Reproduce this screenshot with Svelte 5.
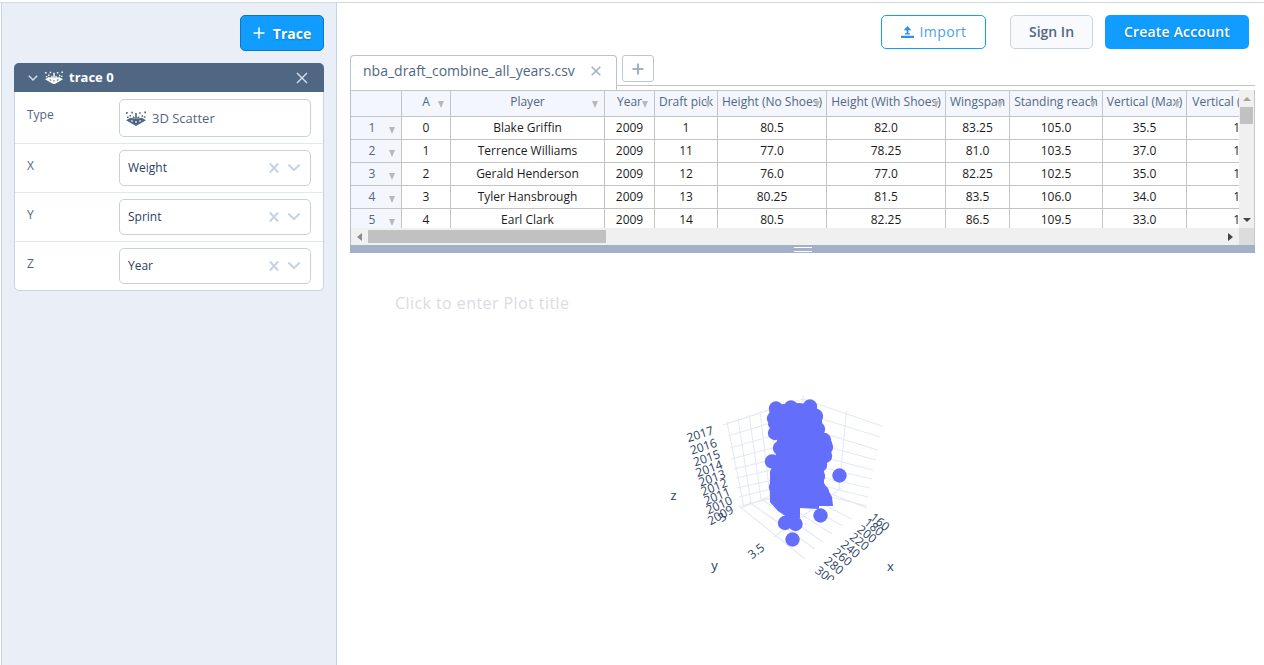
<script>
  const columns = [
    { name: 'A', width: 49, values: ['0', '1', '2', '3', '4'] },
    { name: 'Player', width: 154, values: ['Blake Griffin', 'Terrence Williams', 'Gerald Henderson', 'Tyler Hansbrough', 'Earl Clark'] },
    { name: 'Year', width: 50, values: ['2009', '2009', '2009', '2009', '2009'] },
    { name: 'Draft pick', width: 63, values: ['1', '11', '12', '13', '14'] },
    { name: 'Height (No Shoes)', width: 109, values: ['80.5', '77.0', '76.0', '80.25', '80.5'] },
    { name: 'Height (With Shoes)', width: 119, values: ['82.0', '78.25', '77.0', '81.5', '82.25'] },
    { name: 'Wingspan', width: 64, values: ['83.25', '81.0', '82.25', '83.5', '86.5'] },
    { name: 'Standing reach', width: 93, values: ['105.0', '103.5', '102.5', '106.0', '109.5'] },
    { name: 'Vertical (Max)', width: 84, values: ['35.5', '37.0', '35.0', '34.0', '33.0'] },
    { name: 'Vertical (Max Reach)', width: 124, values: ['140.5', '140.5', '137.5', '140.0', '142.5'] },
  ];
  const template = ['51px', ...columns.map((c) => c.width + 'px')].join(' ');
  const axes = [['X', 'Weight'], ['Y', 'Sprint'], ['Z', 'Year']];

  const zTicks = [
    ['2017', 700, 434, -17], ['2016', 703.5, 446.5, -18], ['2015', 706.5, 458, -19],
    ['2014', 709, 468.5, -20], ['2013', 712, 478, -20], ['2012', 714, 487, -21],
    ['2011', 717, 496, -22], ['2010', 719, 505, -24], ['2009', 720.5, 515, -29], ['3', 722, 517, -38],
  ];
  const xTicks = [
    ['160', 880, 522, 38], ['180', 874, 527, 38], ['200', 867, 534, 38], ['220', 859.5, 541.5, 38],
    ['240', 850.5, 549, 38], ['260', 842.5, 557, 38], ['280', 834, 565.5, 38], ['300', 825, 575, 38],
  ];
  const lines = [
    // y-z wall
    'M723 425L803 399', 'M728 436L803 413', 'M730 448L803 427', 'M731 459L803 440', 'M734 469L803 452',
    'M736 478L803 463', 'M737 488L803 473', 'M739 497L803 481', 'M741 506L803 490',
    'M727 422L744 507', 'M738 418L751 503', 'M749 414L761 499', 'M760 411L770 496', 'M771 408L778 493', 'M787 403L790 490',
    // x-z wall
    'M803 395V490', 'M803 399L882 426', 'M803 413L880 437', 'M803 427L878 450', 'M803 440L876 460',
    'M803 452L873 470', 'M803 463L872 479', 'M803 473L870 488', 'M803 481L868 497', 'M803 490L867 506',
    'M846.5 411L839 490',
    // floor
    'M739 506L805 559', 'M749 502L815 549', 'M760 498L823 542', 'M770 494L832 534', 'M779 491L843 526',
    'M790 488L852 519', 'M803 483L867 508', 'M774 537L841 488', 'M741 508L803 483',
  ];
  const points = [
    [776, 408.5], [791, 407.5], [810, 406.5], [774, 418.5], [816, 416], [775, 433], [818, 429], [824, 440],
    [826, 447], [825, 456], [772, 461.5], [780, 448], [777, 473], [776, 487], [820, 465], [818, 476],
    [777, 499], [822, 492], [785, 506], [790, 508], [796, 420], [788, 480], [785, 523], [795.5, 524],
    [820.5, 515.5], [839.5, 475.5], [792.5, 539.5],
  ];
</script>

{#snippet scatterIcon(w)}
  <svg class="scatter" width={w} height={w * 0.75} viewBox="0 0 20 15" fill="currentColor">
    <path d="M0 9.2L4.3 6.8L9.2 8V2H10.8V8L15.7 6.8L20 9.2L10 15Z" />
    <path d="M6 7.4L7.8 5L9.2 7.5zM14 7.4L12.2 5L10.8 7.5z" />
    <path d="M0 1h1.7v1.7H0zM3.5 4h1.5v1.5H3.5zM1 5.6h1.6v1.5H1zM5.3.8h1.6v1.6H5.3zM13.2 1.2h1.6v1.6h-1.6zM15.5 4.2H17v1.5h-1.5zM18.3.5H20v1.7h-1.7zM17.8 5.3h1.6v1.5h-1.6z" />
    <path class="hole" d="M9.3 10.2h1.4v1.6H9.3zM5.5 9.3l1.8.8-1 .6-1.7-.8zM14.5 9.3l-1.8.8 1 .6 1.7-.8z" />
  </svg>
{/snippet}

<div class="page">
  <aside>
    <div class="actions">
      <button class="trace-btn"><svg width="12" height="12" viewBox="0 0 12 12"><path d="M6 .5v11M.5 6h11" stroke="#fff" stroke-width="1.5" /></svg><b>Trace</b></button>
    </div>
    <section class="card">
      <header>
        <svg class="chev" width="10" height="6" viewBox="0 0 10 6"><path d="M.8.8L5 5L9.2.8" fill="none" stroke="#d8e0ec" stroke-width="1.4" /></svg>
        {@render scatterIcon(18)}
        <b>trace 0</b>
        <svg class="x" width="12" height="12" viewBox="0 0 12 12"><path d="M1 1l10 10M11 1L1 11" stroke="#d8e0ec" stroke-width="1.4" /></svg>
      </header>
      <div class="field type">
        <label for="type">Type</label>
        <div class="select" id="type">{@render scatterIcon(20)}<span>3D Scatter</span></div>
      </div>
      {#each axes as [axis, value]}
        <div class="field">
          <label for={axis}>{axis}</label>
          <div class="select" id={axis}>
            <span>{value}</span>
            <svg width="10" height="10" viewBox="0 0 10 10"><path d="M.9.5l8.2 9M9.1.5L.9 9.5" stroke="#c8d4e3" stroke-width="2.2" /></svg>
            <svg width="12" height="8" viewBox="0 0 12 8"><path d="M1 1.2L6 6L11 1.2" fill="none" stroke="#c8d4e3" stroke-width="2.2" stroke-linecap="round" /></svg>
          </div>
        </div>
      {/each}
    </section>
  </aside>

  <main>
    <nav>
      <button class="import"><svg width="13" height="12" viewBox="0 0 13 12"><path d="M0 9.7h13V12H0zM5.6 2.5h1.8V8H5.6zM2.5 4.2L6.5 0L10.5 4.2zM4 7.3h5v1.2H4z" fill="#2f8fe0" /></svg><span>Import</span></button>
      <button class="signin"><span>Sign In</span></button>
      <button class="create"><span>Create Account</span></button>
    </nav>

    <div class="tabs">
      <div class="tab"><span>nba_draft_combine_all_years.csv</span><svg width="10" height="10" viewBox="0 0 10 10"><path d="M.7.7l8.6 8.6M9.3.7L.7 9.3" stroke="#a2b1c6" stroke-width="1.6" /></svg></div>
      <div class="rest"><button class="add" aria-label="Add"><svg width="12" height="12" viewBox="0 0 12 12"><path d="M6 .5v11M.5 6h11" stroke="#a2b1c6" stroke-width="2" /></svg></button></div>
    </div>

    <div class="sheet">
      <div class="viewport">
        <div class="row head" style="grid-template-columns:{template}">
          <div class="cell"></div>
          {#each columns as c}
            <div class="cell"><span>{c.name}</span><i></i></div>
          {/each}
        </div>
        {#each [0, 1, 2, 3, 4] as r}
          <div class="row" style="grid-template-columns:{template}">
            <div class="cell index"><span>{r + 1}</span><i></i></div>
            {#each columns as c}<div class="cell"><span>{c.values[r]}</span></div>{/each}
          </div>
        {/each}
      </div>
      <div class="vbar"><i class="up"></i><div></div><i class="down"></i></div>
      <div class="hbar"><i class="left"></i><div></div><i class="right"></i></div>
      <div class="corner"></div>
    </div>
    <div class="splitter"><span></span></div>

    <div class="plot">
      <svg width="904" height="412" viewBox="350 253 904 412">
        <clipPath id="scene"><rect x="600" y="380" width="400" height="200" /></clipPath>
        <text x="395" y="308.5" font-size="16" fill="#dadcdf" textLength="174">Click to enter Plot title</text>
        <g clip-path="url(#scene)">
          <path d={lines.join('')} stroke="#e5e9f6" stroke-width="1.1" fill="none" />
          <g fill="#636efa">
            <path d="M770 408L783 404L800 403L816 406L822 418L822 430L832 442L831 456L824 468L824 483L832 497L833 506H819V509L800 508V518L790 519L778 511L770 502L770 476L775 462L777 440L768 425Z" />
            {#each points as [x, y]}<circle cx={x} cy={y} r="7.2" />{/each}
          </g>
          <g font-size="12" fill="#2a3f5f" text-anchor="middle">
            {#each [...zTicks, ...xTicks] as [label, x, y, angle]}
              <text transform="translate({x} {y}) rotate({angle})" y="4.3">{label}</text>
            {/each}
            <text transform="translate(756 551) rotate(-38)" y="4.3">3.5</text>
            <text x="673.5" y="500" font-size="13">z</text>
            <text x="714.5" y="570" font-size="13">y</text>
            <text x="890.5" y="571" font-size="13">x</text>
          </g>
        </g>
      </svg>
    </div>
  </main>
</div>

<style>
  :global(body) { background: #fff; overflow: hidden; }
  * { box-sizing: border-box; }
  .page { width: 1264px; height: 665px; padding-top: 2px; display: flex; font: 12px "Open Sans", sans-serif; color: #506784; overflow: hidden; }
  svg { display: block; flex: none; }
  button { font: inherit; padding: 0; display: flex; align-items: center; justify-content: center; border-radius: 5px; }
  aside { width: 336px; margin-left: 1px; background: #e9eef7; border: 1px solid #c8d4e3; border-bottom: 0; padding: 12px 12px 0; flex: none; }
  .actions { display: flex; justify-content: flex-end; }
  .trace-btn { width: 84px; height: 36px; background: #119dff; border: 1px solid #0d76bf; color: #fff; gap: 8px; font-size: 14px; text-shadow: 0 1px 2px #0d76bf; }
  .card { margin-top: 12px; width: 310px; height: 228px; background: #fff; border: 1px solid #c8d4e3; border-radius: 5px; }
  .card header { height: 29px; margin: -1px -1px 0; background: #506784; border-radius: 5px 5px 0 0; color: #fff; display: flex; align-items: center; padding: 0 16px 0 14px; font-size: 13px; }
  header .chev { margin-right: 7px; }
  header b { margin-left: 6px; flex: 1; padding-bottom: 1px; }
  .hole { fill: #fff; }
  header .hole { fill: #506784; }
  .field { display: flex; height: 49px; border-top: 1px solid #dfe8f3; padding: 6px 12px 0; }
  .field.type { height: 51px; border: 0; padding-top: 7px; }
  .field label { width: 92px; padding-top: 7px; line-height: 18px; }
  .select { width: 192px; height: 36px; border: 1px solid #c8d0df; border-radius: 5px; display: flex; align-items: center; gap: 9px; padding: 0 10px 0 8px; color: #2a3f5f; }
  .select span { flex: 1; padding-bottom: 2px; }
  .type .select { height: 38px; gap: 6px; padding-left: 6px; color: #506784; font-size: 13px; }
  .type .select span { padding: 0; }
  main { width: 904px; margin-left: 13px; }
  .page::before { content: ""; position: absolute; left: 0; top: 2px; width: 1264px; height: 1px; background: #d3d9e3; }
  nav { display: flex; justify-content: flex-end; margin-right: 5px; padding-top: 13px; height: 53px; font-size: 14px; }
  nav button { height: 34px; }
  nav span { padding-bottom: 2px; }
  .import { width: 105px; margin-right: 24px; border: 1px solid #119dff; background: #fff; color: #4d9fe8; gap: 6px; }
  .import span { letter-spacing: .4px; }
  .signin { width: 83px; margin-right: 12px; border: 1px solid #c8d4e3; background: #f8fafd; color: #506784; font-weight: 600; }
  .create { width: 144px; border: 0; background: #119dff; color: #fff; font-weight: 600; letter-spacing: .2px; text-shadow: 0 1px 2px #0d76bf; }
  .tabs { display: flex; height: 35px; width: 905px; }
  .tab { width: 267px; border: 1px solid #bcc3cf; border-bottom: 0; border-radius: 4px 4px 0 0; display: flex; align-items: center; padding: 0 15px 5px 12px; font-size: 14px; justify-content: space-between; }
  .tab span { padding-bottom: 1px; }
  .rest { flex: 1; height: 31px; border-bottom: 1px solid #bfc3cb; padding-left: 5px; }
  .add { width: 32px; height: 27px; background: #fff; border: 1px solid #c0c6d1; border-radius: 3px; }
  .sheet { width: 905px; height: 155px; border-left: 1px solid #b8c0ce; border-right: 1px solid #c3c9d4; display: grid; grid-template: 138px 17px / 888px 15px; overflow: hidden; }
  .viewport { overflow: hidden; border-top: 1px solid #c4c4c4; }
  .row { display: grid; height: 23px; width: max-content; color: #1c1c1c; }
  .cell { position: relative; display: flex; justify-content: center; align-items: center; border-right: 1px solid #c4c4c4; border-bottom: 1px solid #c4c4c4; white-space: nowrap; }
  .cell span { padding-bottom: 2px; }
  .head { height: 26px; color: #506784; }
  .head .cell, .index { background: #f3f6fc; color: #506784; }
  .head span { padding-bottom: 4px; }
  .index { padding-right: 8px; }
  .cell i { position: absolute; right: 6px; top: 10px; border: solid transparent; border-width: 7px 3.5px 0; border-top-color: #b8b8b8; }
  .vbar, .hbar { background: #f0f0f0; display: flex; align-items: center; }
  .vbar { flex-direction: column; padding: 7px 0 6px; }
  .vbar div { width: 13px; height: 17px; margin: 6px 0 auto; background: #c1c1c1; }
  .hbar { padding: 0 6px; }
  .hbar div { width: 238px; height: 13px; margin: 0 auto 0 6px; background: #c1c1c1; }
  .corner { background: #dcdcdc; }
  .up, .down, .left, .right { border: solid transparent; }
  .up { border-width: 0 4px 4px; border-bottom-color: #a3a3a3; }
  .down { border-width: 4px 4px 0; border-top-color: #444; }
  .left { border-width: 4px 5px 4px 0; border-right-color: #8b8b8b; }
  .right { border-width: 4px 0 4px 5px; border-left-color: #444; }
  .splitter { width: 905px; height: 8px; background: #a2b1c6; display: flex; align-items: center; justify-content: center; }
  .splitter span { width: 18px; height: 5px; border: solid #fff; border-width: 1px 0; }
</style>
